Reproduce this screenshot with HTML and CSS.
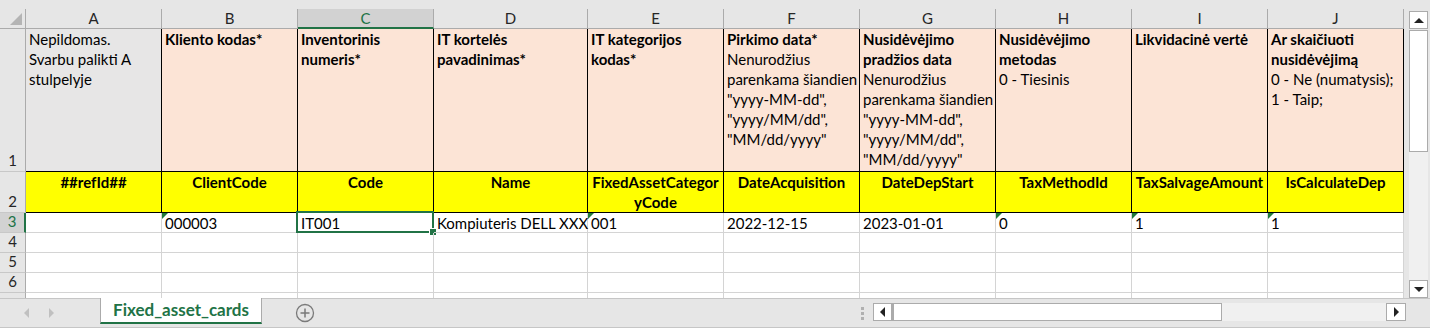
FILE: index.html
```html
<!DOCTYPE html>
<html lang="lt">
<head>
<meta charset="utf-8">
<title>Fixed_asset_cards</title>
<link rel="stylesheet" href="styles.css">
</head>
<body>
<div class="app">
  <div class="topgap"></div>
  <div class="main">
    <div class="sheet">
      <!-- column headers -->
      <div class="corner"><span class="corner-tri"></span></div>
      <div class="ch">A</div>
      <div class="ch">B</div>
      <div class="ch sel">C</div>
      <div class="ch">D</div>
      <div class="ch">E</div>
      <div class="ch">F</div>
      <div class="ch">G</div>
      <div class="ch">H</div>
      <div class="ch">I</div>
      <div class="ch">J</div>

      <!-- row 1 -->
      <div class="rh">1</div>
      <div class="desc na">Nepildomas.<br>Svarbu palikti A<br>stulpelyje</div>
      <div class="desc"><b>Kliento kodas*</b></div>
      <div class="desc"><b>Inventorinis<br>numeris*</b></div>
      <div class="desc"><b>IT kortelės<br>pavadinimas*</b></div>
      <div class="desc"><b>IT kategorijos<br>kodas*</b></div>
      <div class="desc"><b>Pirkimo data*</b><br>Nenurodžius<br>parenkama šiandien<br>"yyyy-MM-dd",<br>"yyyy/MM/dd",<br>"MM/dd/yyyy"</div>
      <div class="desc"><b>Nusidėvėjimo<br>pradžios data</b><br>Nenurodžius<br>parenkama šiandien<br>"yyyy-MM-dd",<br>"yyyy/MM/dd",<br>"MM/dd/yyyy"</div>
      <div class="desc"><b>Nusidėvėjimo<br>metodas</b><br>0 - Tiesinis</div>
      <div class="desc"><b>Likvidacinė vertė</b></div>
      <div class="desc"><b>Ar skaičiuoti<br>nusidėvėjimą</b><br>0 - Ne (numatysis);<br>1 - Taip;</div>

      <!-- row 2 -->
      <div class="rh">2</div>
      <div class="key">##refId##</div>
      <div class="key">ClientCode</div>
      <div class="key">Code</div>
      <div class="key">Name</div>
      <div class="key">FixedAssetCategor<br>yCode</div>
      <div class="key">DateAcquisition</div>
      <div class="key">DateDepStart</div>
      <div class="key">TaxMethodId</div>
      <div class="key">TaxSalvageAmount</div>
      <div class="key">IsCalculateDep</div>

      <!-- row 3 -->
      <div class="rh sel">3</div>
      <div class="c"></div>
      <div class="c tri">000003</div>
      <div class="c active">IT001<span class="selbox"><span class="handle"></span></span></div>
      <div class="c">Kompiuteris DELL XXX</div>
      <div class="c tri">001</div>
      <div class="c">2022-12-15</div>
      <div class="c">2023-01-01</div>
      <div class="c tri">0</div>
      <div class="c tri">1</div>
      <div class="c tri">1</div>

      <!-- row 4 -->
      <div class="rh">4</div>
      <div class="c"></div><div class="c"></div><div class="c"></div><div class="c"></div><div class="c"></div>
      <div class="c"></div><div class="c"></div><div class="c"></div><div class="c"></div><div class="c"></div>

      <!-- row 5 -->
      <div class="rh">5</div>
      <div class="c"></div><div class="c"></div><div class="c"></div><div class="c"></div><div class="c"></div>
      <div class="c"></div><div class="c"></div><div class="c"></div><div class="c"></div><div class="c"></div>

      <!-- row 6 -->
      <div class="rh">6</div>
      <div class="c"></div><div class="c"></div><div class="c"></div><div class="c"></div><div class="c"></div>
      <div class="c"></div><div class="c"></div><div class="c"></div><div class="c"></div><div class="c"></div>

      <!-- row 7 (only its top edge is visible) -->
      <div class="rh"></div>
      <div class="c"></div><div class="c"></div><div class="c"></div><div class="c"></div><div class="c"></div>
      <div class="c"></div><div class="c"></div><div class="c"></div><div class="c"></div><div class="c"></div>
    </div>

    <div class="vscroll">
      <div class="sbtn"><span class="arr-up"></span></div>
      <div class="vthumb"></div>
      <div class="vtrack"></div>
      <div class="sbtn"><span class="arr-down"></span></div>
    </div>
  </div>

  <div class="tabbar">
    <div class="tabnav">
      <span class="nav-left"></span>
      <span class="nav-right"></span>
    </div>
    <div class="tab">Fixed_asset_cards</div>
    <div class="addsheet">
      <svg width="20" height="20" viewBox="0 0 20 20">
        <circle cx="10" cy="10" r="8.5" fill="none" stroke="#7a7a7a" stroke-width="1.3"/>
        <path d="M10 5.5v9M5.5 10h9" stroke="#7a7a7a" stroke-width="1.5"/>
      </svg>
    </div>
    <div class="spacer"></div>
    <div class="splitter"><span></span><span></span><span></span></div>
    <div class="hscroll">
      <div class="hbtn"><span class="arr-left"></span></div>
      <div class="hthumb"></div>
      <div class="htrack"></div>
      <div class="hbtn right"><span class="arr-right"></span></div>
    </div>
    <div class="hgap"></div>
  </div>
</div>
</body>
</html>
```

FILE: styles.css
```css
* { box-sizing: border-box; }

html, body {
  margin: 0;
  padding: 0;
  background: #e6e6e6;
}

body {
  font-family: "Lato", "Noto Sans", "DejaVu Sans", sans-serif;
  font-size: 15px;
  color: #000;
}

.app {
  width: 1430px;
  height: 328px;
  display: flex;
  flex-direction: column;
  overflow: hidden;
}

.topgap { height: 9px; flex: 0 0 9px; }

.main {
  display: flex;
  height: 289px;
  flex: 0 0 289px;
}

.sheet {
  width: 1404px;
  height: 289px;
  overflow: hidden;
  display: grid;
  grid-template-columns: 26px 136px 136px 136px 154px 136px 136px 136px 136px 136px 136px;
  grid-template-rows: 20px 143px 41px 20px 20px 20px 20px 20px;
  background: #fff;
}

.corner {
  background: #e6e6e6;
  border-right: 1px solid #ababab;
  border-bottom: 1px solid #ababab;
  position: relative;
}
.corner-tri {
  position: absolute;
  right: 3px;
  bottom: 3px;
  width: 0;
  height: 0;
  border-left: 12px solid transparent;
  border-bottom: 12px solid #b4b4b4;
}

.ch {
  background: #e6e6e6;
  border-right: 1px solid #ababab;
  border-bottom: 1px solid #ababab;
  color: #262626;
  text-align: center;
  line-height: 19px;
  font-size: 15px;
}
.ch.sel {
  background: #d2d2d2;
  color: #217346;
  border-bottom: 2px solid #217346;
}

.rh {
  background: #e6e6e6;
  border-right: 1px solid #ababab;
  border-bottom: 1px solid #c8c8c8;
  color: #262626;
  display: flex;
  align-items: flex-end;
  justify-content: center;
  line-height: 20px;
  padding-bottom: 1px;
  font-size: 15px;
}
.rh.sel {
  background: #d2d2d2;
  color: #217346;
  border-right: 2px solid #217346;
}

.desc {
  background: #fce4d6;
  border-right: 1px solid #000;
  border-bottom: 1px solid #000;
  line-height: 20px;
  padding: 0 2px 0 3px;
  white-space: nowrap;
  overflow: hidden;
}
.desc.na { background: #e7e6e6; }
.desc b { font-weight: 700; }

.key {
  background: #ffff00;
  border-right: 1px solid #000;
  border-bottom: 1px solid #000;
  font-weight: 700;
  text-align: center;
  line-height: 20px;
  white-space: nowrap;
  overflow: hidden;
}

.c {
  border-right: 1px solid #d4d4d4;
  border-bottom: 1px solid #d4d4d4;
  line-height: 20px;
  padding-left: 3px;
  white-space: nowrap;
  position: relative;
}

.tri::before {
  content: "";
  position: absolute;
  top: 0;
  left: 0;
  width: 0;
  height: 0;
  border-top: 6px solid #1f7a3a;
  border-right: 6px solid transparent;
}

.active { overflow: visible; }
.selbox {
  position: absolute;
  top: -2px;
  left: -2px;
  right: -1px;
  bottom: -1px;
  border: 2px solid #217346;
  pointer-events: none;
}
.handle {
  position: absolute;
  right: -4px;
  bottom: -4px;
  width: 6px;
  height: 6px;
  background: #217346;
  outline: 1px solid #fff;
}

/* vertical scrollbar */
.vscroll {
  width: 26px;
  display: flex;
  flex-direction: column;
  padding: 2px 2px 0 5px;
  background: #e6e6e6;
}
.sbtn {
  height: 18px;
  flex: 0 0 18px;
  background: #fff;
  border: 1px solid #ababab;
  display: flex;
  align-items: center;
  justify-content: center;
}
.arr-up {
  width: 0; height: 0;
  border-left: 5px solid transparent;
  border-right: 5px solid transparent;
  border-bottom: 5px solid #222;
}
.arr-down {
  width: 0; height: 0;
  border-left: 5px solid transparent;
  border-right: 5px solid transparent;
  border-top: 5px solid #222;
}
.vthumb {
  margin-top: 1px;
  flex: 0 0 122px;
  background: #fff;
  border: 1px solid #ababab;
}
.vtrack {
  flex: 1;
  background: #f0f0f0;
}

/* bottom bar */
.tabbar {
  flex: 1;
  display: flex;
  align-items: flex-start;
  border-top: 1px solid #c6c6c6;
  border-bottom: 1px solid #c6c6c6;
  background: #e6e6e6;
}
.tabnav {
  width: 100px;
  height: 28px;
  display: flex;
  align-items: center;
  gap: 20px;
  padding-left: 24px;
}
.nav-left {
  width: 0; height: 0;
  border-top: 5px solid transparent;
  border-bottom: 5px solid transparent;
  border-right: 5px solid #c0c0c0;
}
.nav-right {
  width: 0; height: 0;
  border-top: 5px solid transparent;
  border-bottom: 5px solid transparent;
  border-left: 5px solid #c0c0c0;
}
.tab {
  width: 162px;
  height: 26px;
  margin-top: -1px;
  background: #fff;
  border-left: 1px solid #ababab;
  border-right: 1px solid #ababab;
  border-bottom: 2px solid #217346;
  color: #217346;
  font-weight: 700;
  font-size: 17px;
  text-align: center;
  line-height: 23px;
}
.addsheet {
  margin-left: 33px;
  height: 28px;
  display: flex;
  align-items: center;
}
.spacer { flex: 1; }
.splitter {
  width: 18px;
  display: flex;
  flex-direction: column;
  gap: 2px;
  padding: 8px 0 0 6px;
}
.splitter span {
  width: 3px;
  height: 3px;
  background: #b0b0b0;
}
.hscroll {
  width: 533px;
  height: 18px;
  margin-top: 4px;
  display: flex;
}
.hbtn {
  width: 19px;
  background: #fff;
  border: 1px solid #ababab;
  display: flex;
  align-items: center;
  justify-content: center;
}
.hbtn.right { width: 20px; }
.arr-left {
  width: 0; height: 0;
  border-top: 5px solid transparent;
  border-bottom: 5px solid transparent;
  border-right: 5px solid #222;
}
.arr-right {
  width: 0; height: 0;
  border-top: 5px solid transparent;
  border-bottom: 5px solid transparent;
  border-left: 5px solid #222;
}
.hthumb {
  width: 330px;
  background: #fff;
  border: 1px solid #ababab;
  border-left: 2px solid #ababab;
}
.htrack {
  flex: 1;
  background: #f0f0f0;
}
.hgap { width: 24px; }
```
